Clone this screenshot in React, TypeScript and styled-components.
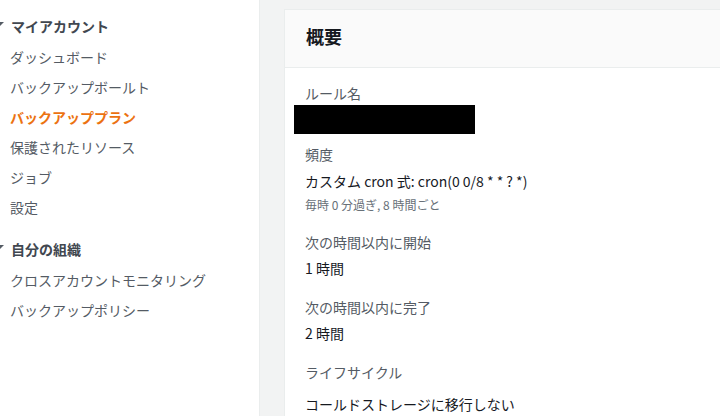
import React, { FunctionComponent } from 'react';
import styled, { createGlobalStyle } from 'styled-components';

const GlobalStyle = createGlobalStyle`
  html, body {
    margin: 0;
    padding: 0;
    height: 100%;
    overflow: hidden;
  }
  body {
    font-family: "Noto Sans CJK JP", "Noto Sans", sans-serif;
    background: #f2f3f3;
  }
`;

const Page = styled.div`
  display: flex;
  width: 720px;
  height: 416px;
  overflow: hidden;
`;

const Sidebar = styled.nav`
  width: 260px;
  flex-shrink: 0;
  background: #ffffff;
  border-right: 1px solid #eaeded;
  padding-top: 11px;
  box-sizing: border-box;
`;

const Section = styled.div`
  & + & {
    margin-top: 12px;
  }
`;

const SectionHeading = styled.div`
  display: flex;
  align-items: center;
  height: 30px;
  margin-bottom: 1px;
  font-size: 14px;
  font-weight: 700;
  color: #414750;
`;

const Caret = styled.svg`
  width: 8px;
  height: 8px;
  margin-left: -4px;
  margin-right: 7px;
  margin-top: -4px;
  flex-shrink: 0;
`;

const NavItem = styled.div<{ $active?: boolean }>`
  height: 30px;
  line-height: 30px;
  padding-left: 10px;
  font-size: 14px;
  white-space: nowrap;
  color: ${p => (p.$active ? '#ec7211' : '#545b64')};
  font-weight: ${p => (p.$active ? 700 : 400)};
`;

const Main = styled.main`
  flex: 1;
  padding: 9px 0 0 24px;
  min-width: 0;
`;

const Card = styled.section`
  background: #ffffff;
  border: 1px solid #eaeded;
  border-bottom: none;
  margin-right: -20px;
  height: 420px;
`;

const CardHeader = styled.header`
  height: 58px;
  box-sizing: border-box;
  display: flex;
  align-items: center;
  padding: 0 0 5px 21px;
  background: #fafafa;
  border-bottom: 1px solid #eaeded;
  font-size: 18px;
  font-weight: 700;
  color: #16191f;
`;

const CardBody = styled.div`
  padding: 15px 20px 0 20px;
`;

const Field = styled.div`
  margin-bottom: 19px;
`;

const Label = styled.div<{ $gap?: number }>`
  font-size: 14px;
  line-height: 20px;
  color: #545b64;
  margin-bottom: ${p => p.$gap ?? 6}px;
`;

const Value = styled.div`
  font-size: 14px;
  line-height: 20px;
  height: 20px;
  color: #16191f;
  white-space: nowrap;
`;

const Note = styled.div`
  font-size: 12px;
  line-height: 16px;
  margin-top: 6px;
  color: #687078;
`;

const Redacted = styled.div`
  width: 181px;
  height: 29px;
  margin: -4px 0 -5px -11px;
  background: #000000;
`;

const CaretIcon = () => (
  <Caret viewBox="0 0 8 8">
    <path d="M0 2 L4 6 L8 2 Z" fill="#545b64" />
  </Caret>
);

type NavSection = {
  title: string;
  items: string[];
};

const sections: NavSection[] = [
  {
    title: 'マイアカウント',
    items: [
      'ダッシュボード',
      'バックアップボールト',
      'バックアッププラン',
      '保護されたリソース',
      'ジョブ',
      '設定',
    ],
  },
  {
    title: '自分の組織',
    items: ['クロスアカウントモニタリング', 'バックアップポリシー'],
  },
];

const ACTIVE = 'バックアッププラン';

const App: FunctionComponent = () => (
  <>
    <GlobalStyle />
    <Page>
      <Sidebar>
        {sections.map(section => (
          <Section key={section.title}>
            <SectionHeading>
              <CaretIcon />
              {section.title}
            </SectionHeading>
            {section.items.map(item => (
              <NavItem key={item} $active={item === ACTIVE}>
                {item}
              </NavItem>
            ))}
          </Section>
        ))}
      </Sidebar>
      <Main>
        <Card>
          <CardHeader>概要</CardHeader>
          <CardBody>
            <Field>
              <Label>ルール名</Label>
              <Value>
                <Redacted />
              </Value>
            </Field>
            <Field>
              <Label $gap={7}>頻度</Label>
              <Value>カスタム cron 式: cron(0 0/8 * * ? *)</Value>
              <Note>毎時 0 分過ぎ, 8 時間ごと</Note>
            </Field>
            <Field>
              <Label>次の時間以内に開始</Label>
              <Value>1 時間</Value>
            </Field>
            <Field>
              <Label>次の時間以内に完了</Label>
              <Value>2 時間</Value>
            </Field>
            <Field>
              <Label $gap={12}>ライフサイクル</Label>
              <Value>コールドストレージに移行しない</Value>
            </Field>
          </CardBody>
        </Card>
      </Main>
    </Page>
  </>
);

export default App;
